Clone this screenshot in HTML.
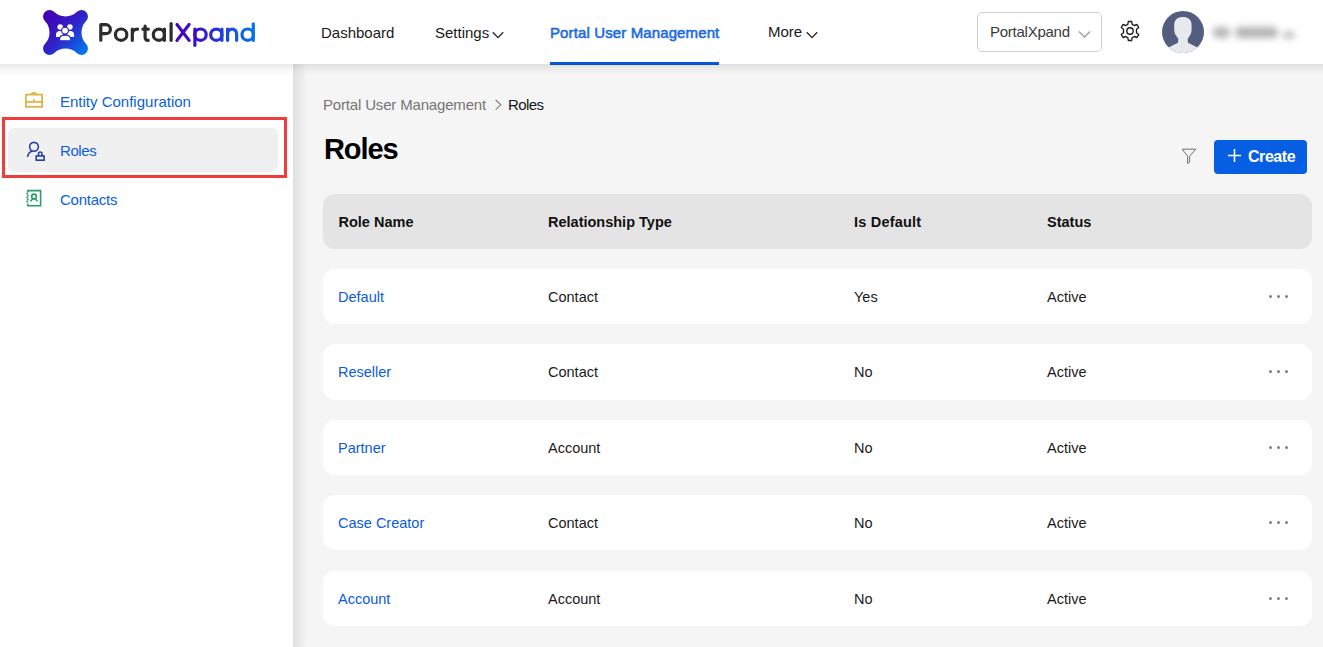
<!DOCTYPE html>
<html><head><meta charset="utf-8">
<style>
*{box-sizing:border-box;margin:0;padding:0}
html,body{width:1323px;height:647px;overflow:hidden;background:#f5f5f5;font-family:"Liberation Sans",sans-serif;color:#222}
.abs{position:absolute}
#header{position:absolute;left:0;top:0;width:1323px;height:64px;background:#fff;z-index:5;box-shadow:none}
#sidebar{position:absolute;left:0;top:64px;width:293px;height:583px;background:#fff;z-index:4;box-shadow:none}
.nav{position:absolute;top:23px;font-size:15px;line-height:20px;color:#1a1a1a;white-space:nowrap}
.chev{display:inline-block;vertical-align:middle}
.side-item{position:absolute;left:60px;font-size:15px;line-height:20px;color:#0b5fdf;white-space:nowrap}
.row{position:absolute;left:323px;width:989px;height:55px;background:#fff;border-radius:12px}
.cell{position:absolute;top:19px;font-size:14.5px;line-height:18px;color:#1b1b1b;white-space:nowrap}
.cell.link{color:#0b5cdf}
.hcell{position:absolute;top:19px;font-size:14.5px;line-height:18px;font-weight:bold;color:#111;white-space:nowrap}
.dots{position:absolute;left:946px;top:26px;width:20px;height:3px}
.dots i{position:absolute;top:0;width:3px;height:3px;border-radius:50%;background:#808080}
</style></head>
<body>
<div id="header">
  <!-- logo -->
  <svg class="abs" style="left:43px;top:10px" width="45" height="45" viewBox="0 0 45 45">
    <defs>
      <linearGradient id="lg" gradientUnits="userSpaceOnUse" x1="4" y1="4" x2="41" y2="41">
        <stop offset="0" stop-color="#4600b2"/>
        <stop offset="0.5" stop-color="#2f22c8"/>
        <stop offset="1" stop-color="#0474ee"/>
      </linearGradient>
    </defs>
    <path fill="url(#lg)" d="M11.03,1.84 A16.44,16.44 0 0 0 33.97,1.84 A6.5,6.5 0 0 1 43.16,11.03 A16.44,16.44 0 0 0 43.16,33.97 A6.5,6.5 0 0 1 33.97,43.16 A16.44,16.44 0 0 0 11.03,43.16 A6.5,6.5 0 0 1 1.84,33.97 A16.44,16.44 0 0 0 1.84,11.03 A6.5,6.5 0 0 1 11.03,1.84 Z"/>
    <g fill="#fff">
      <circle cx="17.2" cy="17" r="2.8"/>
      <circle cx="26.9" cy="17" r="2.8"/>
      <path d="M13,26.9 L13,24.5 C13,22.3 14.6,21 16.8,21 C18.2,21 19.3,21.6 20,22.4 L20,26.9 Z"/>
      <path d="M31.1,26.9 L31.1,24.5 C31.1,22.3 29.5,21 27.3,21 C25.9,21 24.8,21.6 24.1,22.4 L24.1,26.9 Z"/>
      <circle cx="22.05" cy="20.6" r="3.4" stroke="url(#lg)" stroke-width="1.1"/>
      <path d="M16.7,30.8 L16.7,28.6 C16.7,26.3 18.8,25.1 22.05,25.1 C25.3,25.1 27.4,26.3 27.4,28.6 L27.4,30.8 Z" stroke="url(#lg)" stroke-width="1.1"/>
    </g>
  </svg>
  <svg class="abs" style="left:90px;top:15px" width="170" height="35" viewBox="90 15 170 35">
    <defs>
      <linearGradient id="tg" gradientUnits="userSpaceOnUse" x1="175" y1="0" x2="256" y2="0">
        <stop offset="0" stop-color="#4a04bf"/>
        <stop offset="0.3" stop-color="#3a12c8"/>
        <stop offset="0.52" stop-color="#2434d6"/>
        <stop offset="0.72" stop-color="#1456e0"/>
        <stop offset="1" stop-color="#0773ee"/>
      </linearGradient>
    </defs>
    <g fill="none" stroke-width="3.2" stroke-linecap="round" stroke-linejoin="round">
      <g stroke="#2d2d2d">
        <path d="M100.8,40.2 L100.8,24.7 L105.9,24.7 A4.5,4.5 0 0 1 105.9,33.7 L100.8,33.7"/>
        <circle cx="121.15" cy="34.7" r="5.7"/>
        <path d="M132.3,40.3 L132.3,29.2 M132.3,34.2 C132.3,31 134.3,29.2 137.6,29.2"/>
        <path d="M145.1,26 L145.1,37.2 C145.1,39.3 146.3,40.3 148.3,40.3 M142.9,29.2 L148.3,29.2"/>
        <circle cx="158.9" cy="34.7" r="5.6"/>
        <path d="M164.4,29.1 L164.4,40.3"/>
        <path d="M171.1,23.6 L171.1,40.3"/>
      </g>
      <g stroke="url(#tg)">
        <path d="M177,24.5 L189.1,40.4 M189.1,24.5 L177,40.4"/>
        <path d="M194.9,29.1 L194.9,45.3"/>
        <circle cx="200.5" cy="34.7" r="5.7"/>
        <circle cx="216.3" cy="34.7" r="5.6"/>
        <path d="M221.9,29.1 L221.9,40.3"/>
        <path d="M227.6,40.3 L227.6,29.1 M227.6,34.2 C227.6,31 229.5,29.1 232.1,29.1 C234.7,29.1 236.65,31 236.65,34.2 L236.65,40.3"/>
        <circle cx="247.7" cy="34.7" r="5.7"/>
        <path d="M253.3,23.8 L253.3,40.3"/>
      </g>
    </g>
  </svg>

  <div class="nav" style="left:321px">Dashboard</div>
  <div class="nav" style="left:435px">Settings</div><svg class="abs" style="left:492px;top:30.5px" width="12" height="8" viewBox="0 0 12 8"><path d="M0.8,1.2 L6,6.6 L11.2,1.2" fill="none" stroke="#222" stroke-width="1.3"/></svg>
  <div class="nav" style="left:550px;color:#1a6ae0;-webkit-text-stroke:0.55px #1a6ae0;letter-spacing:0.12px">Portal User Management</div>
  <div class="abs" style="left:550px;top:62px;width:169px;height:3px;background:#0657dc"></div>
  <div class="nav" style="left:768px;top:22px">More</div><svg class="abs" style="left:806px;top:30.5px" width="12" height="8" viewBox="0 0 12 8"><path d="M0.8,1.2 L6,6.6 L11.2,1.2" fill="none" stroke="#222" stroke-width="1.3"/></svg>

  <!-- dropdown -->
  <div class="abs" style="left:977px;top:12px;width:125px;height:40px;border:1px solid #cfcfcf;border-radius:5px"></div>
  <div class="abs" style="left:990px;top:22px;font-size:15px;line-height:20px;color:#3a3a3a;letter-spacing:-0.25px;white-space:nowrap">PortalXpand</div>
  <svg class="abs" style="left:1078px;top:30px" width="13" height="9" viewBox="0 0 13 9"><path d="M1,1.5 L6.5,7 L12,1.5" fill="none" stroke="#aaa" stroke-width="1.7"/></svg>

  <!-- gear -->
  <svg class="abs" style="left:1119px;top:20px" width="22" height="22" viewBox="0 0 22 22">
    <path fill="none" stroke="#1e1e1e" stroke-width="1.35" stroke-linejoin="round" d="M9.3,1.5 L12.7,1.5 L13.2,4.3 L15.3,5.5 L18,4.5 L19.7,7.4 L17.5,9.3 L17.5,12.7 L19.7,14.6 L18,17.5 L15.3,16.5 L13.2,17.7 L12.7,20.5 L9.3,20.5 L8.8,17.7 L6.7,16.5 L4,17.5 L2.3,14.6 L4.5,12.7 L4.5,9.3 L2.3,7.4 L4,4.5 L6.7,5.5 L8.8,4.3 Z"/>
    <circle cx="11" cy="11" r="3.2" fill="none" stroke="#1e1e1e" stroke-width="1.4"/>
  </svg>

  <!-- avatar -->
  <svg class="abs" style="left:1162px;top:11px" width="42" height="42" viewBox="0 0 42 42">
    <defs><clipPath id="cc"><circle cx="21" cy="21" r="21"/></clipPath></defs>
    <circle cx="21" cy="21" r="21" fill="#525d7f"/>
    <g clip-path="url(#cc)" fill="#e6eaec">
      <path d="M20.9,5.9 C25.8,5.9 29.6,8.2 29.6,14 L29.6,18.5 C29.6,21.5 28.6,23.5 27.3,25.5 L25.6,28 L26,31.8 L36,36.8 L43,44 L-1,44 L6,36.8 L16,31.8 L16.4,28 L14.7,25.5 C13.3,23.5 12.2,21.5 12.2,18.5 L12.2,14 C12.2,8.2 16,5.9 20.9,5.9 Z"/>
    </g>
  </svg>
  <!-- blurred name -->
  <div class="abs" style="left:1213px;top:27px;width:17px;height:11px;background:#b4b4b4;border-radius:5px;filter:blur(3.5px)"></div>
  <div class="abs" style="left:1235px;top:27px;width:43px;height:11px;background:#b2b2b2;border-radius:5px;filter:blur(3.5px)"></div>
  <div class="abs" style="left:1283px;top:31px;width:12px;height:8px;background:#c6c6c6;border-radius:4px;filter:blur(3px)"></div>
</div>

<div id="sidebar">
  <!-- entity config icon -->
  <svg class="abs" style="left:24px;top:27px" width="20" height="17" viewBox="0 0 20 17">
    <g fill="none" stroke="#e0b449" stroke-width="1.8">
      <rect x="1.9" y="3.6" width="16.2" height="12.2"/>
      <line x1="1.9" y1="10.9" x2="18.1" y2="10.9"/>
      <path d="M7.5,3.6 C7.5,1.2 12.5,1.2 12.5,3.6"/>
      <line x1="10" y1="8.2" x2="10" y2="10"/>
    </g>
  </svg>
  <div class="side-item" style="top:28px">Entity Configuration</div>

  <div class="abs" style="left:2px;top:53px;width:285px;height:61px;border:3px solid #ef3d3d"></div>
  <div class="abs" style="left:8px;top:64px;width:270px;height:44px;background:#f0f0f0;border-radius:6px"></div>
  <svg class="abs" style="left:25px;top:77px" width="22" height="20" viewBox="0 0 22 20">
    <g fill="none" stroke="#2d3fa6" stroke-width="1.6">
      <circle cx="9" cy="5.8" r="4.4"/>
      <path d="M2.6,16 C3,12.5 5,10.6 7.5,10"/>
      <rect x="11.2" y="15" width="7.9" height="4.2"/>
      <path d="M13.5,15 L13.5,12.8 A1.75,1.75 0 0 1 17,12.8 L17,15"/>
    </g>
  </svg>
  <div class="side-item" style="top:77px;letter-spacing:-0.4px">Roles</div>

  <svg class="abs" style="left:25px;top:125px" width="17" height="18" viewBox="0 0 17 18">
    <g fill="none" stroke="#2b9d68" stroke-width="1.6">
      <path d="M2.9,3.5 L2.9,1.6 L15.6,1.6 L15.6,16.8 L2.9,16.8 L2.9,14.5"/>
      <line x1="2.9" y1="5.5" x2="2.9" y2="7.5"/>
      <line x1="2.9" y1="9.5" x2="2.9" y2="11.5"/>
      <line x1="1.2" y1="4.5" x2="3" y2="4.5"/>
      <line x1="1.2" y1="8.5" x2="3" y2="8.5"/>
      <line x1="1.2" y1="12.5" x2="3" y2="12.5"/>
      <circle cx="9" cy="7.4" r="2.3"/>
      <path d="M5.5,12.3 C6.5,10.5 7.5,9.8 9,9.8 C10.5,9.8 11.5,10.5 12.5,12.3"/>
    </g>
  </svg>
  <div class="side-item" style="top:126px;letter-spacing:-0.25px">Contacts</div>
</div>

<!-- main -->
<div class="abs" style="left:0;top:64px;width:1323px;height:11px;background:linear-gradient(180deg,rgba(0,0,0,.085),rgba(0,0,0,.05) 35%,rgba(0,0,0,.02) 70%,rgba(0,0,0,0));z-index:6"></div>
<div class="abs" style="left:293px;top:64px;width:14px;height:583px;background:linear-gradient(90deg,rgba(0,0,0,.085),rgba(0,0,0,.06) 30%,rgba(0,0,0,.035) 65%,rgba(0,0,0,0));z-index:3"></div>
<div class="abs" style="left:323px;top:95px;font-size:15px;line-height:20px;color:#757575;letter-spacing:-0.17px;white-space:nowrap">Portal User Management</div>
<svg class="abs" style="left:494px;top:99px" width="9" height="12" viewBox="0 0 9 12"><path d="M1.6,1 L6.9,5.8 L1.6,10.6" fill="none" stroke="#7a7a7a" stroke-width="1.05"/></svg>
<div class="abs" style="left:508px;top:95px;font-size:15px;line-height:20px;color:#151515;letter-spacing:-0.6px;white-space:nowrap">Roles</div>

<div class="abs" style="left:324px;top:132px;font-size:29px;line-height:34px;font-weight:bold;color:#000;letter-spacing:-1.1px;white-space:nowrap">Roles</div>

<svg class="abs" style="left:1181px;top:148px" width="16" height="16" viewBox="0 0 16 16"><path d="M1.2,1.2 L14.8,1.2 L8.6,8.2 L8.6,14.2 L6.6,15.4 L6.6,8.2 Z" fill="none" stroke="#6e6e6e" stroke-width="1" stroke-linejoin="round"/></svg>
<div class="abs" style="left:1214px;top:140px;width:93px;height:34px;background:#065fe2;border-radius:4px"></div>
<svg class="abs" style="left:1228px;top:149px" width="13" height="13" viewBox="0 0 13 13"><path d="M6.5,0 L6.5,13 M0,6.5 L13,6.5" stroke="#fff" stroke-width="1.6"/></svg>
<div class="abs" style="left:1248px;top:147px;font-size:16px;line-height:20px;font-weight:bold;color:#fff;letter-spacing:-0.45px;white-space:nowrap">Create</div>

<!-- table header -->
<div class="row" style="top:194px;background:#e4e4e4">
  <div class="hcell" style="left:15.5px">Role Name</div>
  <div class="hcell" style="left:225px">Relationship Type</div>
  <div class="hcell" style="left:531px;letter-spacing:0.2px">Is Default</div>
  <div class="hcell" style="left:724px">Status</div>
</div>

<div class="row" style="top:269px">
  <div class="cell link" style="left:15px">Default</div>
  <div class="cell" style="left:225px">Contact</div>
  <div class="cell" style="left:531px">Yes</div>
  <div class="cell" style="left:724px">Active</div>
  <div class="dots"><i style="left:0"></i><i style="left:8px"></i><i style="left:16px"></i></div>
</div>
<div class="row" style="top:344px;height:56px">
  <div class="cell link" style="left:15px">Reseller</div>
  <div class="cell" style="left:225px">Contact</div>
  <div class="cell" style="left:531px">No</div>
  <div class="cell" style="left:724px">Active</div>
  <div class="dots"><i style="left:0"></i><i style="left:8px"></i><i style="left:16px"></i></div>
</div>
<div class="row" style="top:420px">
  <div class="cell link" style="left:15px">Partner</div>
  <div class="cell" style="left:225px">Account</div>
  <div class="cell" style="left:531px">No</div>
  <div class="cell" style="left:724px">Active</div>
  <div class="dots"><i style="left:0"></i><i style="left:8px"></i><i style="left:16px"></i></div>
</div>
<div class="row" style="top:495px">
  <div class="cell link" style="left:15px">Case Creator</div>
  <div class="cell" style="left:225px">Contact</div>
  <div class="cell" style="left:531px">No</div>
  <div class="cell" style="left:724px">Active</div>
  <div class="dots"><i style="left:0"></i><i style="left:8px"></i><i style="left:16px"></i></div>
</div>
<div class="row" style="top:571px">
  <div class="cell link" style="left:15px">Account</div>
  <div class="cell" style="left:225px">Account</div>
  <div class="cell" style="left:531px">No</div>
  <div class="cell" style="left:724px">Active</div>
  <div class="dots"><i style="left:0"></i><i style="left:8px"></i><i style="left:16px"></i></div>
</div>
</body></html>
